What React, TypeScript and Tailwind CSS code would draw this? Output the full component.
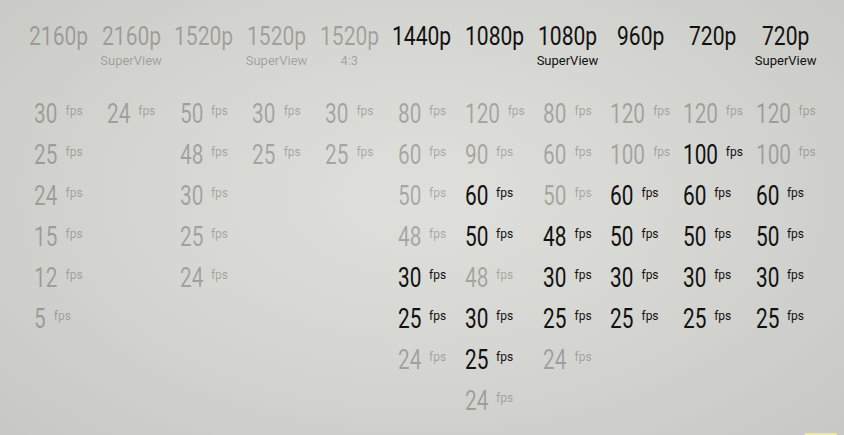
import React from "react";

type Cell = [string, boolean];
type Col = { res: string; sub?: string; on: boolean; rows: Cell[] };

const g = (v: string): Cell => [v, false];
const b = (v: string): Cell => [v, true];

const cols: Col[] = [
  { res: "2160p", on: false, rows: [g("30"), g("25"), g("24"), g("15"), g("12"), g("5")] },
  { res: "2160p", sub: "SuperView", on: false, rows: [g("24")] },
  { res: "1520p", on: false, rows: [g("50"), g("48"), g("30"), g("25"), g("24")] },
  { res: "1520p", sub: "SuperView", on: false, rows: [g("30"), g("25")] },
  { res: "1520p", sub: "4:3", on: false, rows: [g("30"), g("25")] },
  { res: "1440p", on: true, rows: [g("80"), g("60"), g("50"), g("48"), b("30"), b("25"), g("24")] },
  { res: "1080p", on: true, rows: [g("120"), g("90"), b("60"), b("50"), g("48"), b("30"), b("25"), g("24")] },
  { res: "1080p", sub: "SuperView", on: true, rows: [g("80"), g("60"), g("50"), b("48"), b("30"), b("25"), g("24")] },
  { res: "960p", on: true, rows: [g("120"), g("100"), b("60"), b("50"), b("30"), b("25")] },
  { res: "720p", on: true, rows: [g("120"), b("100"), b("60"), b("50"), b("30"), b("25")] },
  { res: "720p", sub: "SuperView", on: true, rows: [g("120"), g("100"), b("60"), b("50"), b("30"), b("25")] },
];

const ADV = 0.5615;

function Head({ text }: { text: string }) {
  const w = text.length * ADV * 26 * 0.81;
  return (
    <span className="inline-block whitespace-nowrap" style={{ width: w }}>
      <span className="inline-block origin-left scale-x-[0.81]">{text}</span>
    </span>
  );
}

function Num({ text }: { text: string }) {
  const w = text.length * ADV * 27 * 0.77;
  return (
    <span className="inline-block whitespace-nowrap text-[27px] leading-[41px]" style={{ width: w }}>
      <span className="inline-block origin-left scale-x-[0.77]">{text}</span>
    </span>
  );
}

export default function App() {
  return (
    <div
      className="relative w-[844px] h-[435px] overflow-hidden bg-[radial-gradient(ellipse_70%_80%_at_50%_45%,#dfdfdb_0%,#d6d6d2_45%,#c7c7c3_100%)]"
      style={{ fontFamily: 'Roboto, "Liberation Sans", sans-serif' }}
    >
      <div className="grid grid-cols-11 px-[22px] pt-[21px]">
        {cols.map((c, i) => (
          <div key={i} className="flex flex-col items-center">
            <div
              className={`text-[26px] leading-[30px] ${c.on ? "text-[#111]" : "text-[rgba(0,0,0,0.26)]"}`}
            >
              <Head text={c.res} />
            </div>
            <div
              className={`mt-[2px] h-[16px] text-[13px] leading-[16px] ${c.on ? "text-[#111]" : "text-[rgba(0,0,0,0.26)]"}`}
            >
              {c.sub ?? ""}
            </div>
            <div className="mt-[25px] flex flex-col">
              {c.rows.map(([v, on], j) => (
                <div
                  key={j}
                  className={`flex h-[41px] items-start ${on ? "text-[#111]" : "text-[rgba(0,0,0,0.26)]"}`}
                >
                  <Num text={v} />
                  <span className="ml-[8px] mt-[11px] text-[12px] leading-[12px]">fps</span>
                </div>
              ))}
            </div>
          </div>
        ))}
      </div>
      <div className="absolute bottom-0 left-[805px] h-[2px] w-[32px] bg-[#ecec9c]" />
    </div>
  );
}
